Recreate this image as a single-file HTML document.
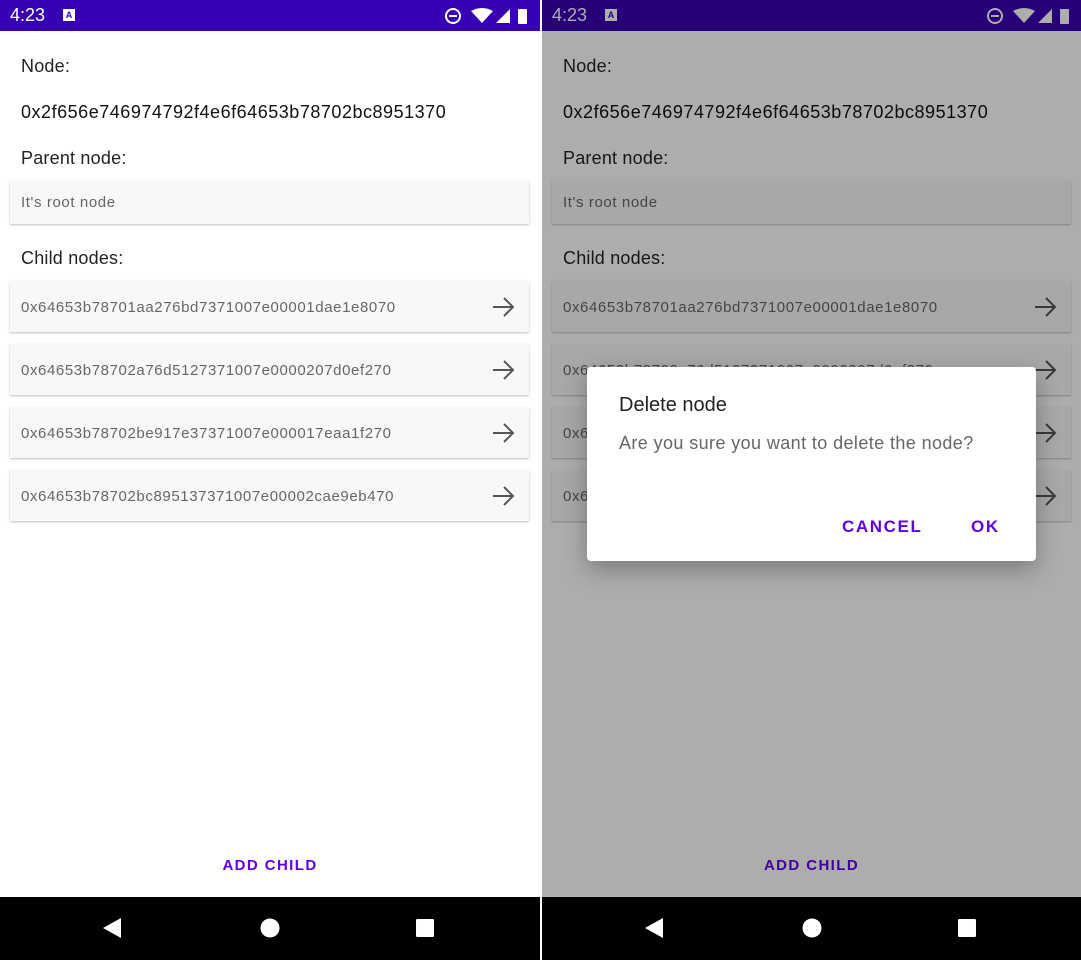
<!DOCTYPE html><html><head><style>
*{margin:0;padding:0;box-sizing:border-box}
body{width:1081px;height:963px;background:#fff;position:relative;overflow:hidden;font-family:"Liberation Sans",sans-serif}
.p{position:absolute;top:0;width:540px;height:960px;background:#fff;overflow:hidden}
.sb{position:absolute;left:0;top:0;width:100%;height:31px;background:#3700b3;color:#fff}
.t{position:absolute;left:10px;top:5px;font-size:18px}
.nav{position:absolute;left:0;top:897px;width:100%;height:63px;background:#000}
.lbl{position:absolute;left:21px;font-size:18px;color:#222;letter-spacing:0.2px}
.card{position:absolute;left:10px;width:519px;background:#f8f8f8;box-shadow:0 1px 2px rgba(0,0,0,.25);font-size:15px;color:#666}
.card span{position:absolute;left:11px;letter-spacing:0.6px}
.card svg{position:absolute;right:14px;top:14px}
.add{position:absolute;top:857px;width:100%;text-align:center;font-size:15px;letter-spacing:1.4px;color:#6200ee;font-weight:bold}
.ov{position:absolute;left:0;top:0;width:100%;height:100%;background:rgba(0,0,0,.32)}
</style></head><body>
<div class="p" style="left:0" id="a">
<div class="sb"><span class="t">4:23</span>
<div style="position:absolute;left:63px;top:9px;width:12px;height:12px;background:#fff;color:#3700b3;font-size:9px;text-align:center;font-weight:bold;line-height:12px">A</div>
<svg style="position:absolute;left:444px;top:6px" width="90" height="20"><circle cx="9" cy="10" r="7" fill="none" stroke="#fff" stroke-width="2"/><rect x="5" y="9" width="8" height="2" fill="#fff"/><path d="M27 5 Q38 -1 49 5 L38 17Z" fill="#fff"/><path d="M66 3 L66 17 L52 17Z" fill="#fff"/><rect x="74" y="3" width="9" height="15" rx="1" fill="#fff"/></svg></div>
<div class="lbl" style="top:56px">Node:</div>
<div class="lbl" style="top:102px;color:#111;letter-spacing:0.52px">0x2f656e746974792f4e6f64653b78702bc8951370</div>
<div class="lbl" style="top:148px">Parent node:</div>
<div class="card" style="top:181px;height:43px"><span style="top:13px">It's root node</span></div>
<div class="lbl" style="top:248px">Child nodes:</div>
<div class="card" style="top:281px;height:51px"><span style="top:18px">0x64653b78701aa276bd7371007e00001dae1e8070</span><svg width="24" height="24"><path d="M2 12H22M13 3L22 12L13 21" fill="none" stroke="#555" stroke-width="2"/></svg></div>
<div class="card" style="top:344px;height:51px"><span style="top:18px">0x64653b78702a76d5127371007e0000207d0ef270</span><svg width="24" height="24"><path d="M2 12H22M13 3L22 12L13 21" fill="none" stroke="#555" stroke-width="2"/></svg></div>
<div class="card" style="top:407px;height:51px"><span style="top:18px">0x64653b78702be917e37371007e000017eaa1f270</span><svg width="24" height="24"><path d="M2 12H22M13 3L22 12L13 21" fill="none" stroke="#555" stroke-width="2"/></svg></div>
<div class="card" style="top:470px;height:51px"><span style="top:18px">0x64653b78702bc895137371007e00002cae9eb470</span><svg width="24" height="24"><path d="M2 12H22M13 3L22 12L13 21" fill="none" stroke="#555" stroke-width="2"/></svg></div>
<div class="add">ADD CHILD</div>
<div class="nav"><svg width="540" height="63"><path d="M103 31L121 21V41Z" fill="#fff"/><circle cx="270" cy="31" r="9.5" fill="#fff"/><rect x="416" y="22" width="18" height="18" rx="1.5" fill="#fff"/></svg></div>
</div>
<div class="p" style="left:542px;width:539px">
<div class="sb"><span class="t">4:23</span>
<div style="position:absolute;left:63px;top:9px;width:12px;height:12px;background:#fff;color:#3700b3;font-size:9px;text-align:center;font-weight:bold;line-height:12px">A</div>
<svg style="position:absolute;left:444px;top:6px" width="90" height="20"><circle cx="9" cy="10" r="7" fill="none" stroke="#fff" stroke-width="2"/><rect x="5" y="9" width="8" height="2" fill="#fff"/><path d="M27 5 Q38 -1 49 5 L38 17Z" fill="#fff"/><path d="M66 3 L66 17 L52 17Z" fill="#fff"/><rect x="74" y="3" width="9" height="15" rx="1" fill="#fff"/></svg></div>
<div class="lbl" style="top:56px">Node:</div>
<div class="lbl" style="top:102px;color:#111;letter-spacing:0.52px">0x2f656e746974792f4e6f64653b78702bc8951370</div>
<div class="lbl" style="top:148px">Parent node:</div>
<div class="card" style="top:181px;height:43px"><span style="top:13px">It's root node</span></div>
<div class="lbl" style="top:248px">Child nodes:</div>
<div class="card" style="top:281px;height:51px"><span style="top:18px">0x64653b78701aa276bd7371007e00001dae1e8070</span><svg width="24" height="24"><path d="M2 12H22M13 3L22 12L13 21" fill="none" stroke="#555" stroke-width="2"/></svg></div>
<div class="card" style="top:344px;height:51px"><span style="top:18px">0x64653b78702a76d5127371007e0000207d0ef270</span><svg width="24" height="24"><path d="M2 12H22M13 3L22 12L13 21" fill="none" stroke="#555" stroke-width="2"/></svg></div>
<div class="card" style="top:407px;height:51px"><span style="top:18px">0x64653b78702be917e37371007e000017eaa1f270</span><svg width="24" height="24"><path d="M2 12H22M13 3L22 12L13 21" fill="none" stroke="#555" stroke-width="2"/></svg></div>
<div class="card" style="top:470px;height:51px"><span style="top:18px">0x64653b78702bc895137371007e00002cae9eb470</span><svg width="24" height="24"><path d="M2 12H22M13 3L22 12L13 21" fill="none" stroke="#555" stroke-width="2"/></svg></div>
<div class="add">ADD CHILD</div>
<div class="ov"></div>
<div class="nav"><svg width="539" height="63"><path d="M103 31L121 21V41Z" fill="#fff"/><circle cx="270" cy="31" r="9.5" fill="#fff"/><rect x="416" y="22" width="18" height="18" rx="1.5" fill="#fff"/></svg></div>
<div style="position:absolute;left:45px;top:367px;width:449px;height:194px;background:#fff;border-radius:4px;box-shadow:0 8px 24px rgba(0,0,0,.3)">
<div style="position:absolute;left:32px;top:27px;font-size:20px;color:#222">Delete node</div>
<div style="position:absolute;left:32px;top:66px;font-size:18px;color:#666;letter-spacing:0.4px">Are you sure you want to delete the node?</div>
<div style="position:absolute;left:255px;top:150px;font-size:17px;font-weight:bold;letter-spacing:1.6px;color:#6200ee">CANCEL</div>
<div style="position:absolute;left:384px;top:150px;font-size:17px;font-weight:bold;letter-spacing:1.6px;color:#6200ee">OK</div>
</div>
</div>
</body></html>
